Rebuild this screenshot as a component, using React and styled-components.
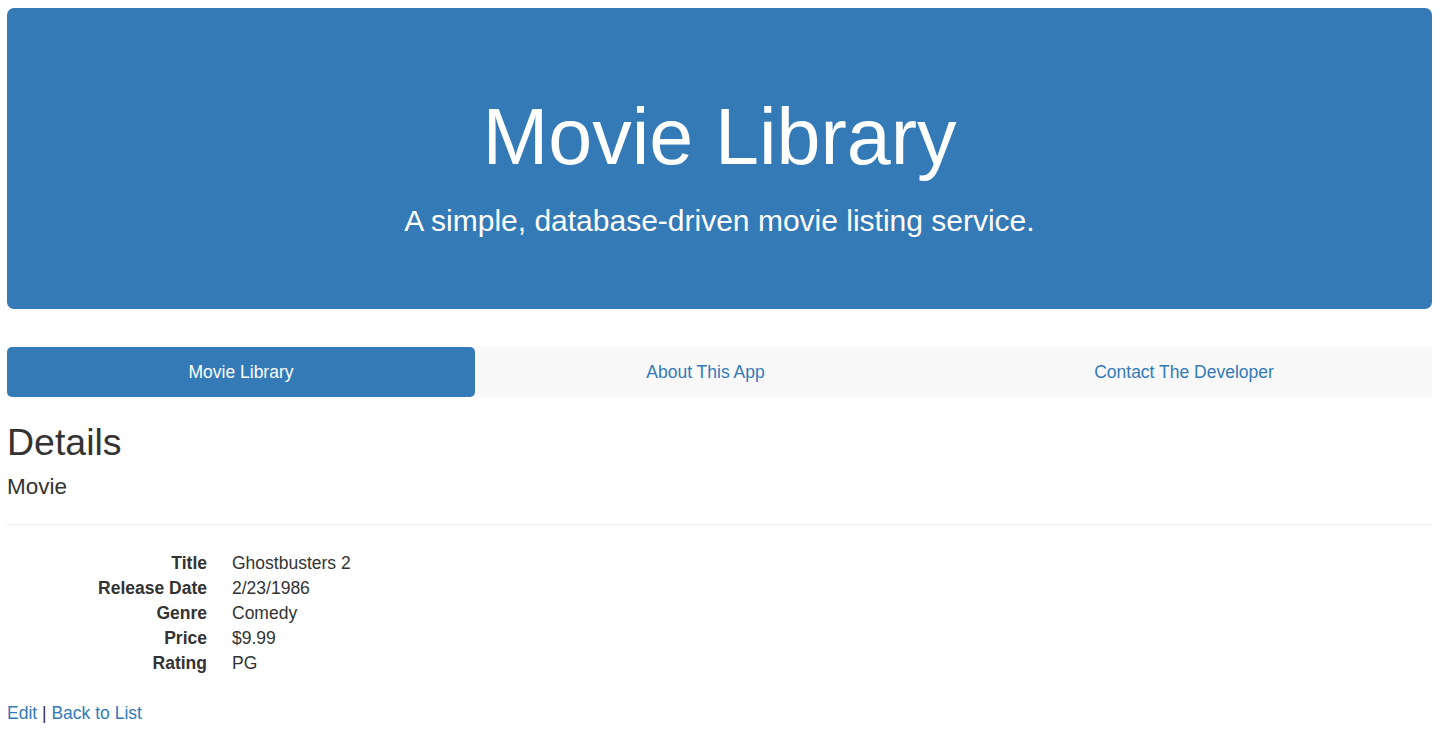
import React from 'react';
import styled, { createGlobalStyle } from 'styled-components';

const GlobalStyle = createGlobalStyle`
body {
  margin: 0;
  font-family: "Liberation Sans", Arial, sans-serif;
  font-size: 17.5px;
  line-height: 25px;
  color: #333;
  background: #fff;
}
`;

const Page = styled.div`
padding: 8px 11px 0 7px;
`;

const Jumbotron = styled.div`
height: 301px;
box-sizing: border-box;
padding-top: 85px;
background-color: #337ab7;
border-radius: 7px;
color: #fff;
text-align: center;
`;

const JumboTitle = styled.h1`
margin: 0;
font-size: 79px;
line-height: 87px;
font-weight: normal;
`;

const JumboText = styled.p`
margin: 19px 0 0 0;
font-size: 30px;
line-height: 43px;
`;

const Nav = styled.ul`
display: flex;
list-style: none;
margin: 38px 0 0 0;
padding: 0;
background-color: #f8f8f8;
`;

const NavItem = styled.li`
flex: ${(props) => (props.grow ? '1 1 auto' : `0 0 ${props.width}px`)};
`;

const NavLink = styled.a`
display: block;
height: 50px;
line-height: 50px;
text-align: center;
text-decoration: none;
border-radius: 5px;
color: ${(props) => (props.active ? '#fff' : '#337ab7')};
background-color: ${(props) => (props.active ? '#337ab7' : 'transparent')};
`;

const Heading = styled.h2`
margin: 25px 0 10.5px 0;
font-size: 37.5px;
line-height: 41px;
font-weight: normal;
`;

const SubHeading = styled.h4`
margin: 0;
font-size: 22.5px;
line-height: 25px;
font-weight: normal;
`;

const Rule = styled.hr`
margin: 25px 0 26px 0;
border: 0;
border-top: 1px solid #eee;
`;

const DetailList = styled.dl`
display: grid;
grid-template-columns: 200px 1fr;
column-gap: 25px;
margin: 0 0 25px 0;
`;

const Term = styled.dt`
font-weight: bold;
text-align: right;
`;

const Value = styled.dd`
margin: 0;
`;

const Links = styled.p`
margin: 0;
`;

const Link = styled.a`
color: #337ab7;
text-decoration: none;
`;

const details = [
  ['Title', 'Ghostbusters 2'],
  ['Release Date', '2/23/1986'],
  ['Genre', 'Comedy'],
  ['Price', '$9.99'],
  ['Rating', 'PG'],
];

function App() {
  return (
    <Page>
      <GlobalStyle />
      <Jumbotron>
        <JumboTitle>Movie Library</JumboTitle>
        <JumboText>A simple, database-driven movie listing service.</JumboText>
      </Jumbotron>
      <Nav>
        <NavItem width={468}>
          <NavLink href="#" active>Movie Library</NavLink>
        </NavItem>
        <NavItem width={461}>
          <NavLink href="#">About This App</NavLink>
        </NavItem>
        <NavItem grow>
          <NavLink href="#">Contact The Developer</NavLink>
        </NavItem>
      </Nav>
      <Heading>Details</Heading>
      <SubHeading>Movie</SubHeading>
      <Rule />
      <DetailList>
        {details.map(([label, value]) => (
          <React.Fragment key={label}>
            <Term>{label}</Term>
            <Value>{value}</Value>
          </React.Fragment>
        ))}
      </DetailList>
      <Links>
        <Link href="#">Edit</Link> | <Link href="#">Back to List</Link>
      </Links>
    </Page>
  );
}

export default App;
